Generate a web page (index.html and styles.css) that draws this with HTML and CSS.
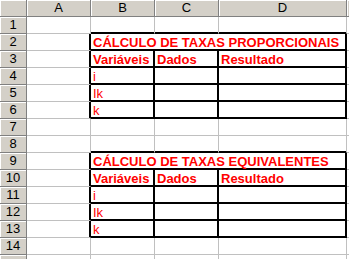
FILE: index.html
```html
<!DOCTYPE html>
<html lang="pt">
	<head>
		<meta charset="UTF-8" />
		<title>Cálculo de Taxas</title>
		<link rel="stylesheet" href="styles.css">
	</head>
	<body>
		<div class="sheet">
			<!-- column headers -->
			<div class="hd corner"></div>
			<div class="hd">A</div>
			<div class="hd">B</div>
			<div class="hd">C</div>
			<div class="hd">D</div>
			<div class="hd"></div>

			<!-- row 1 -->
			<div class="hd num">1</div>
			<div class="cell"></div>
			<div class="cell edge-b"></div>
			<div class="cell edge-b"></div>
			<div class="cell edge-b"></div>
			<div class="cell"></div>

			<!-- first table -->
			<div class="hd num">2</div>
			<div class="cell edge-r"></div>
			<div class="cell box title">CÁLCULO DE TAXAS PROPORCIONAIS</div>
			<div class="cell"></div>

			<div class="hd num">3</div>
			<div class="cell edge-r"></div>
			<div class="cell box bold">Variáveis</div>
			<div class="cell box bold">Dados</div>
			<div class="cell box bold">Resultado</div>
			<div class="cell"></div>

			<div class="hd num">4</div>
			<div class="cell edge-r"></div>
			<div class="cell box">i</div>
			<div class="cell box"></div>
			<div class="cell box"></div>
			<div class="cell"></div>

			<div class="hd num">5</div>
			<div class="cell edge-r"></div>
			<div class="cell box">Ik</div>
			<div class="cell box"></div>
			<div class="cell box"></div>
			<div class="cell"></div>

			<div class="hd num">6</div>
			<div class="cell edge-r"></div>
			<div class="cell box">k</div>
			<div class="cell box"></div>
			<div class="cell box"></div>
			<div class="cell"></div>

			<!-- rows 7-8 -->
			<div class="hd num">7</div>
			<div class="cell"></div>
			<div class="cell"></div>
			<div class="cell"></div>
			<div class="cell"></div>
			<div class="cell"></div>

			<div class="hd num">8</div>
			<div class="cell"></div>
			<div class="cell edge-b"></div>
			<div class="cell edge-b"></div>
			<div class="cell edge-b"></div>
			<div class="cell"></div>

			<!-- second table -->
			<div class="hd num">9</div>
			<div class="cell edge-r"></div>
			<div class="cell box title">CÁLCULO DE TAXAS EQUIVALENTES</div>
			<div class="cell"></div>

			<div class="hd num">10</div>
			<div class="cell edge-r"></div>
			<div class="cell box bold">Variáveis</div>
			<div class="cell box bold">Dados</div>
			<div class="cell box bold">Resultado</div>
			<div class="cell"></div>

			<div class="hd num">11</div>
			<div class="cell edge-r"></div>
			<div class="cell box">i</div>
			<div class="cell box"></div>
			<div class="cell box"></div>
			<div class="cell"></div>

			<div class="hd num">12</div>
			<div class="cell edge-r"></div>
			<div class="cell box">Ik</div>
			<div class="cell box"></div>
			<div class="cell box"></div>
			<div class="cell"></div>

			<div class="hd num">13</div>
			<div class="cell edge-r"></div>
			<div class="cell box">k</div>
			<div class="cell box"></div>
			<div class="cell box"></div>
			<div class="cell"></div>

			<!-- rows 14-15 (15 is cut by the window) -->
			<div class="hd num">14</div>
			<div class="cell"></div>
			<div class="cell"></div>
			<div class="cell"></div>
			<div class="cell"></div>
			<div class="cell"></div>

			<div class="hd num"></div>
			<div class="cell"></div>
			<div class="cell"></div>
			<div class="cell"></div>
			<div class="cell"></div>
			<div class="cell"></div>
		</div>
	</body>
</html>
```

FILE: styles.css
```css
body {
	margin: 0;
	padding: 0;
	background-color: white;
	overflow: hidden;
	font-family: "Liberation Sans", Arial, sans-serif;
	font-size: 13px;
}

.sheet {
	display: grid;
	grid-template-columns: 27px 64px 64px 64px 128px 64px;
	grid-auto-rows: 17px;
	width: 411px;
}

.hd {
	box-sizing: border-box;
	background-color: #d4d0c8;
	border-right: 1px solid #808080;
	border-bottom: 1px solid #808080;
	box-shadow: inset 1px 1px 0 #ffffff;
	text-align: center;
	line-height: 16px;
	color: black;
}

.cell {
	box-sizing: border-box;
	border-right: 1px solid #c0c0c0;
	border-bottom: 1px solid #c0c0c0;
	padding-left: 2px;
	line-height: 17px;
	white-space: nowrap;
	overflow: hidden;
	color: #ff0000;
}

/* thin excel borders show up two pixels wide */
.cell.edge-b {
	border-bottom-color: black;
	box-shadow: inset 0 -1px 0 black;
}

.cell.edge-r {
	border-right-color: black;
	box-shadow: inset -1px 0 0 black;
}

.cell.box {
	border-right-color: black;
	border-bottom-color: black;
	box-shadow: inset 0 -1px 0 black, inset -1px 0 0 black;
}

.cell.title {
	grid-column: span 3;
	font-weight: bold;
}

.cell.bold {
	font-weight: bold;
}
```
